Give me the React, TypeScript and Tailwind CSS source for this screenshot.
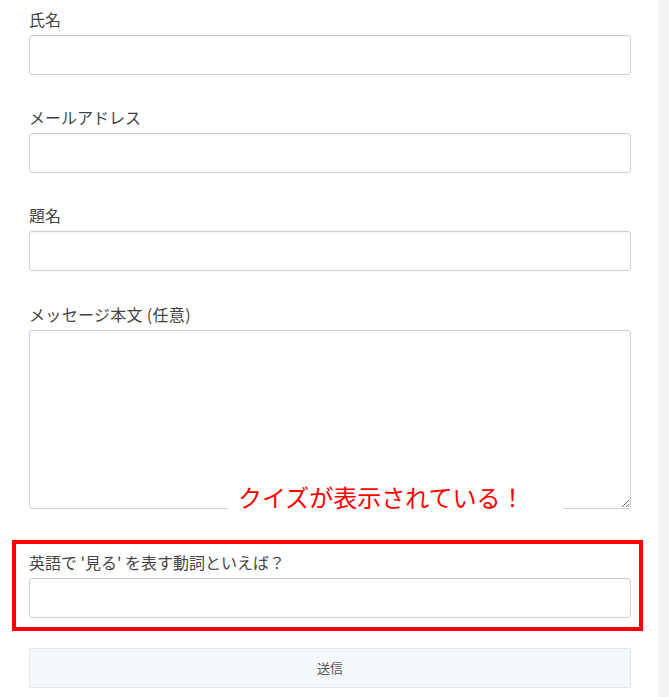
const inputCls =
  'block w-full h-10 rounded-[3px] border border-[#cfcfcf] bg-white px-3 text-[15px] text-[#333] shadow-[inset_0_1px_1px_rgba(0,0,0,0.04)] outline-none'

function Field({ label, last, children }: { label: string; last?: boolean; children: React.ReactNode }) {
  return (
    <div className={last ? 'mb-[31px]' : 'mb-[30px]'}>
      <label className="block mb-1 h-6 leading-6 text-[16px] text-[#444]">{label}</label>
      {children}
    </div>
  )
}

export default function App() {
  return (
    <div
      className="flex w-[669px] h-[697px] bg-white overflow-hidden"
      style={{ fontFamily: '"Noto Sans CJK JP", "Noto Sans", sans-serif' }}
    >
      <div className="flex-1 pl-[29px] pr-[27px] pt-[7px]">
        <Field label="氏名">
          <input type="text" className={inputCls} />
        </Field>
        <Field label="メールアドレス">
          <input type="email" className={inputCls} />
        </Field>
        <Field label="題名" last>
          <input type="text" className={inputCls} />
        </Field>

        {/* message + overlay note */}
        <div>
          <label className="block mb-1 h-6 leading-6 text-[16px] tracking-[0.02em] text-[#444]">メッセージ本文 (任意)</label>
          <div className="relative">
            <textarea className="block w-full h-[179px] rounded-[3px] border border-[#cfcfcf] bg-white px-3 py-2 text-[15px] outline-none" />
            <div className="absolute left-[199px] top-[149px] w-[335px] h-9 bg-white flex items-center pl-[10px] text-[24px] leading-none text-[#ff0000]">
              クイズが表示されている！
            </div>
          </div>
        </div>

        {/* quiz */}
        <div className="mt-[31px] -ml-[17px] -mr-[12px] border-4 border-[#ff0000] pl-[13px] pr-[8px] pt-[6px] pb-[9px]">
          <label className="block mb-1 h-6 leading-6 text-[16px] text-[#444]">
            英語で '見る' を表す動詞といえば？
          </label>
          <input type="text" className={inputCls} />
        </div>

        <button className="mt-[17px] block w-full h-10 border border-[#e3e6e8] bg-[#f5f8fa] text-[13px] text-[#555]">
          送信
        </button>
      </div>
      <div className="w-[11px] bg-[#f2f3f5]" />
    </div>
  )
}
